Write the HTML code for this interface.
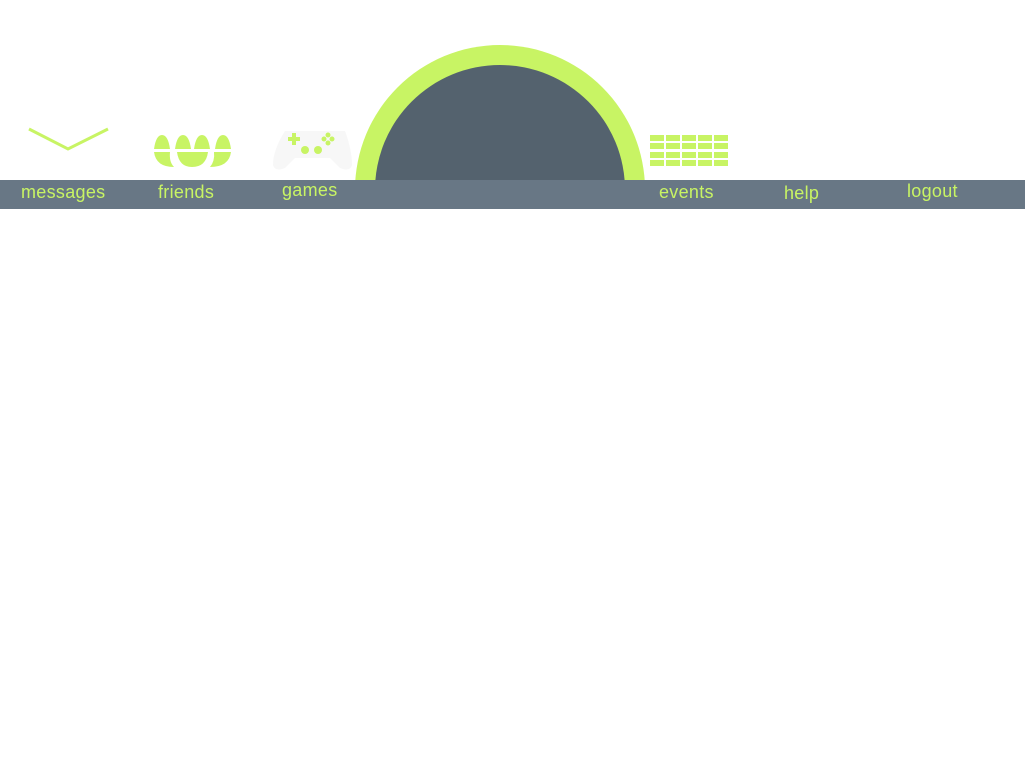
<!DOCTYPE html>
<html><head><style>
body{margin:0;width:1025px;height:768px;background:#fff;position:relative;overflow:hidden;font-family:"Liberation Sans",sans-serif}
.bar{position:absolute;left:0;top:180px;width:1025px;height:29px;background:#687785}
.t{position:absolute;color:#c8f464;font-size:18px;top:182px;letter-spacing:0.3px}
</style></head><body>
<svg width="1025" height="180" style="position:absolute;left:0;top:0">
<circle cx="500" cy="190" r="145" fill="#c8f464"/>
<circle cx="500" cy="190" r="125" fill="#54626e"/>
<polyline points="29,129 68,149 108,129" fill="none" stroke="#c8f464" stroke-width="3"/>
<g fill="#c8f464">
<path d="M154 149 Q156 135 162 135 Q168 135 170 149Z"/>
<path d="M175 149 Q177 135 183 135 Q189 135 191 149Z"/>
<path d="M194 149 Q196 135 202 135 Q208 135 210 149Z"/>
<path d="M215 149 Q217 135 223 135 Q229 135 231 149Z"/>
<path d="M154 152 H170 Q169 162 174 167 Q156 167 154 152Z"/>
<path d="M177 152 H208 Q206 167 192 167 Q179 167 177 152Z"/>
<path d="M214 152 H231 Q229 167 210 167 Q215 161 214 152Z"/>
</g>
<path d="M285 131 H345 Q352 150 352 165 Q350 172 340 168 L330 158 H295 L285 168 Q275 172 273 165 Q273 150 285 131Z" fill="#f7f7f7"/>
<g fill="#c8f464">
<rect x="288" y="137" width="12" height="4"/><rect x="292" y="133" width="4" height="12"/>
<circle cx="305" cy="150" r="4"/><circle cx="318" cy="150" r="4"/>
<circle cx="328" cy="135" r="2.5"/><circle cx="324" cy="139" r="2.5"/><circle cx="332" cy="139" r="2.5"/><circle cx="328" cy="143" r="2.5"/>
</g>
<g fill="#c8f464">
<rect x="650" y="135" width="14" height="6"/><rect x="666" y="135" width="14" height="6"/><rect x="682" y="135" width="14" height="6"/><rect x="698" y="135" width="14" height="6"/><rect x="714" y="135" width="14" height="6"/>
<rect x="650" y="143" width="14" height="6"/><rect x="666" y="143" width="14" height="6"/><rect x="682" y="143" width="14" height="6"/><rect x="698" y="143" width="14" height="6"/><rect x="714" y="143" width="14" height="6"/>
<rect x="650" y="152" width="14" height="6"/><rect x="666" y="152" width="14" height="6"/><rect x="682" y="152" width="14" height="6"/><rect x="698" y="152" width="14" height="6"/><rect x="714" y="152" width="14" height="6"/>
<rect x="650" y="160" width="14" height="6"/><rect x="666" y="160" width="14" height="6"/><rect x="682" y="160" width="14" height="6"/><rect x="698" y="160" width="14" height="6"/><rect x="714" y="160" width="14" height="6"/>
</g>
</svg>
<div class="bar"></div>
<div class="t" style="left:21px">messages</div>
<div class="t" style="left:158px">friends</div>
<div class="t" style="left:282px;top:180px">games</div>
<div class="t" style="left:659px">events</div>
<div class="t" style="left:784px;top:183px">help</div>
<div class="t" style="left:907px;top:181px">logout</div>
</body></html>
